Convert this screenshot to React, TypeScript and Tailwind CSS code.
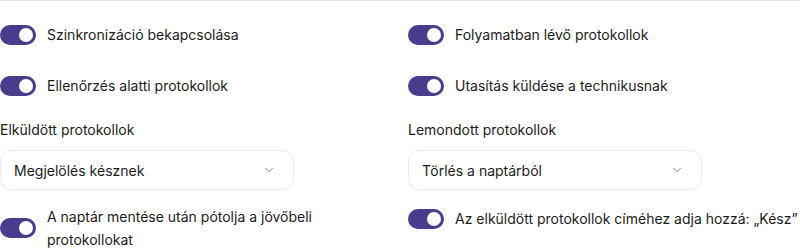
import React from "react";

const Toggle = () => (
    <span className="relative inline-flex h-[20px] w-[36px] shrink-0 items-center rounded-full bg-[#4a3b8c]">
        <span className="absolute right-[3px] h-[14px] w-[14px] rounded-full bg-white"></span>
    </span>
);

const Chevron = () => (
    <svg viewBox="0 0 24 24" fill="none" stroke="currentColor" className="h-[14px] w-[14px] text-[#7a7a7a]">
        <path d="M6 9L12 15L18 9" strokeWidth="1.6" strokeLinecap="round" strokeLinejoin="round" />
    </svg>
);

const SwitchRow = ({ label }: { label: string }) => (
    <div className="flex items-center gap-[11px]">
        <Toggle />
        <span className="whitespace-nowrap leading-[23px]">{label}</span>
    </div>
);

const SelectField = ({ label, value }: { label: string; value: string }) => (
    <div className="flex flex-col">
        <span className="leading-[22px]">{label}</span>
        <div className="mt-[9px] flex h-[40px] w-[294px] items-center justify-between rounded-[12px] border border-[#ececec] bg-white pl-[13px] pr-[17px] shadow-[0_1px_2px_rgba(0,0,0,0.04)]">
            <span>{value}</span>
            <Chevron />
        </div>
    </div>
);

export default function App() {
    return (
        <div className="h-[249px] w-[800px] overflow-hidden border-t border-[#e6e6e6] bg-white text-[14px] text-[#1c1c1c]" style={{ fontFamily: "Inter, 'Noto Sans', sans-serif" }}>
            <div className="grid grid-cols-[408px_1fr] pt-[22px]">
                <div className="flex flex-col">
                    <SwitchRow label="Szinkronizáció bekapcsolása" />
                    <div className="mt-[28px]"><SwitchRow label="Ellenőrzés alatti protokollok" /></div>
                    <div className="mt-[22px]"><SelectField label="Elküldött protokollok" value="Megjelölés késznek" /></div>
                    <div className="mt-[15px] flex items-center gap-[11px]">
                        <Toggle />
                        <span className="leading-[23px]">A naptár mentése után pótolja a jövőbeli<br />protokollokat</span>
                    </div>
                </div>
                <div className="flex flex-col">
                    <SwitchRow label="Folyamatban lévő protokollok" />
                    <div className="mt-[28px]"><SwitchRow label="Utasítás küldése a technikusnak" /></div>
                    <div className="mt-[22px]"><SelectField label="Lemondott protokollok" value="Törlés a naptárból" /></div>
                    <div className="mt-[17px]"><SwitchRow label="Az elküldött protokollok címéhez adja hozzá: „Kész”" /></div>
                </div>
            </div>
        </div>
    );
}
